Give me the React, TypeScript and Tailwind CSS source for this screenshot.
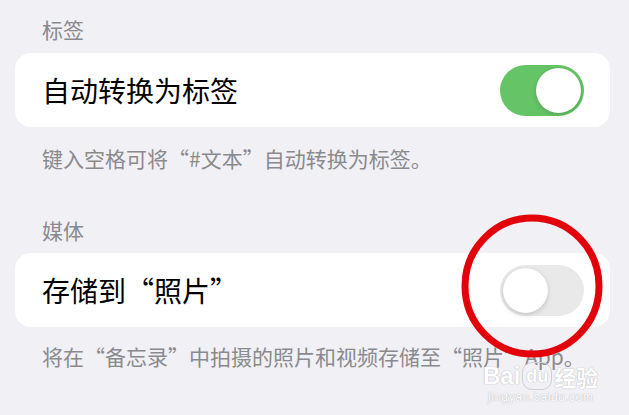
import React from 'react';

const FONT = { fontFamily: '"Noto Sans CJK SC", "Noto Sans", sans-serif' };

const Toggle: React.FC<{ on: boolean }> = ({ on }) => (
  <div
    className={`w-[84px] h-[51px] rounded-full p-[3px] flex ${
      on ? 'bg-[#65c466] justify-end' : 'bg-[#e9e9ea] justify-start'
    }`}
  >
    <div className="w-[45px] h-[45px] rounded-full bg-white shadow-[0_2px_5px_rgba(0,0,0,0.15),0_0_1px_rgba(0,0,0,0.1)]" />
  </div>
);

const SectionHeader: React.FC<{ children: React.ReactNode; className?: string }> = ({ children, className = '' }) => (
  <div className={`px-[27px] text-[21px] leading-[28px] text-[#8a8a8e] ${className}`}>{children}</div>
);

const Row: React.FC<{ label: string; on: boolean }> = ({ label, on }) => (
  <div className="h-[74px] bg-white rounded-[16px] flex items-center justify-between pl-[27px] pr-[26px]">
    <span className="text-[28px] leading-none text-black">{label}</span>
    <Toggle on={on} />
  </div>
);

const Footer: React.FC<{ children: React.ReactNode; className?: string }> = ({ children, className = '' }) => (
  <div className={`px-[27px] text-[21px] leading-[28px] text-[#8a8a8e] whitespace-nowrap ${className}`}>{children}</div>
);

export default function App() {
  return (
    <div className="relative w-[629px] h-[415px] bg-[#f1f0f5] overflow-hidden pl-[15px] pr-[19px]" style={FONT}>
      <SectionHeader className="pt-[15px] mb-[10px]">标签</SectionHeader>
      <Row label="自动转换为标签" on />
      <Footer className="mt-[17px]">键入空格可将“#文本”自动转换为标签。</Footer>

      <SectionHeader className="mt-[44px] mb-[9px]">媒体</SectionHeader>
      <Row label="存储到“照片”" on={false} />
      <Footer className="mt-[15px]">将在“备忘录”中拍摄的照片和视频存储至“照片”App。</Footer>

      {/* red hand-drawn circle annotation */}
      <svg className="absolute left-[456px] top-[211px]" width="152" height="150" viewBox="0 0 152 150">
        <ellipse cx="76" cy="75" rx="67" ry="68" fill="none" stroke="#e3020b" strokeWidth="7" />
      </svg>

      {/* watermark */}
      <div className="absolute left-[483px] top-[362px] flex flex-col items-center text-white [text-shadow:0_0_1px_#b8b8bc,0_0_1px_#b8b8bc]" style={{ fontFamily: '"Liberation Sans", "Noto Sans CJK SC", sans-serif' }}>
        <div className="flex items-center gap-[2px] text-[24px] leading-[26px] font-bold">
          <span>Bai</span>
          <span className="text-[18px] px-[3px] rounded-[10px] border border-[#d0d0d4]">du</span>
          <span className="text-[22px]" style={FONT}>经验</span>
        </div>
        <div className="text-[12px] leading-[14px] tracking-[0.5px]">jingyan.baidu.com</div>
      </div>
    </div>
  );
}
